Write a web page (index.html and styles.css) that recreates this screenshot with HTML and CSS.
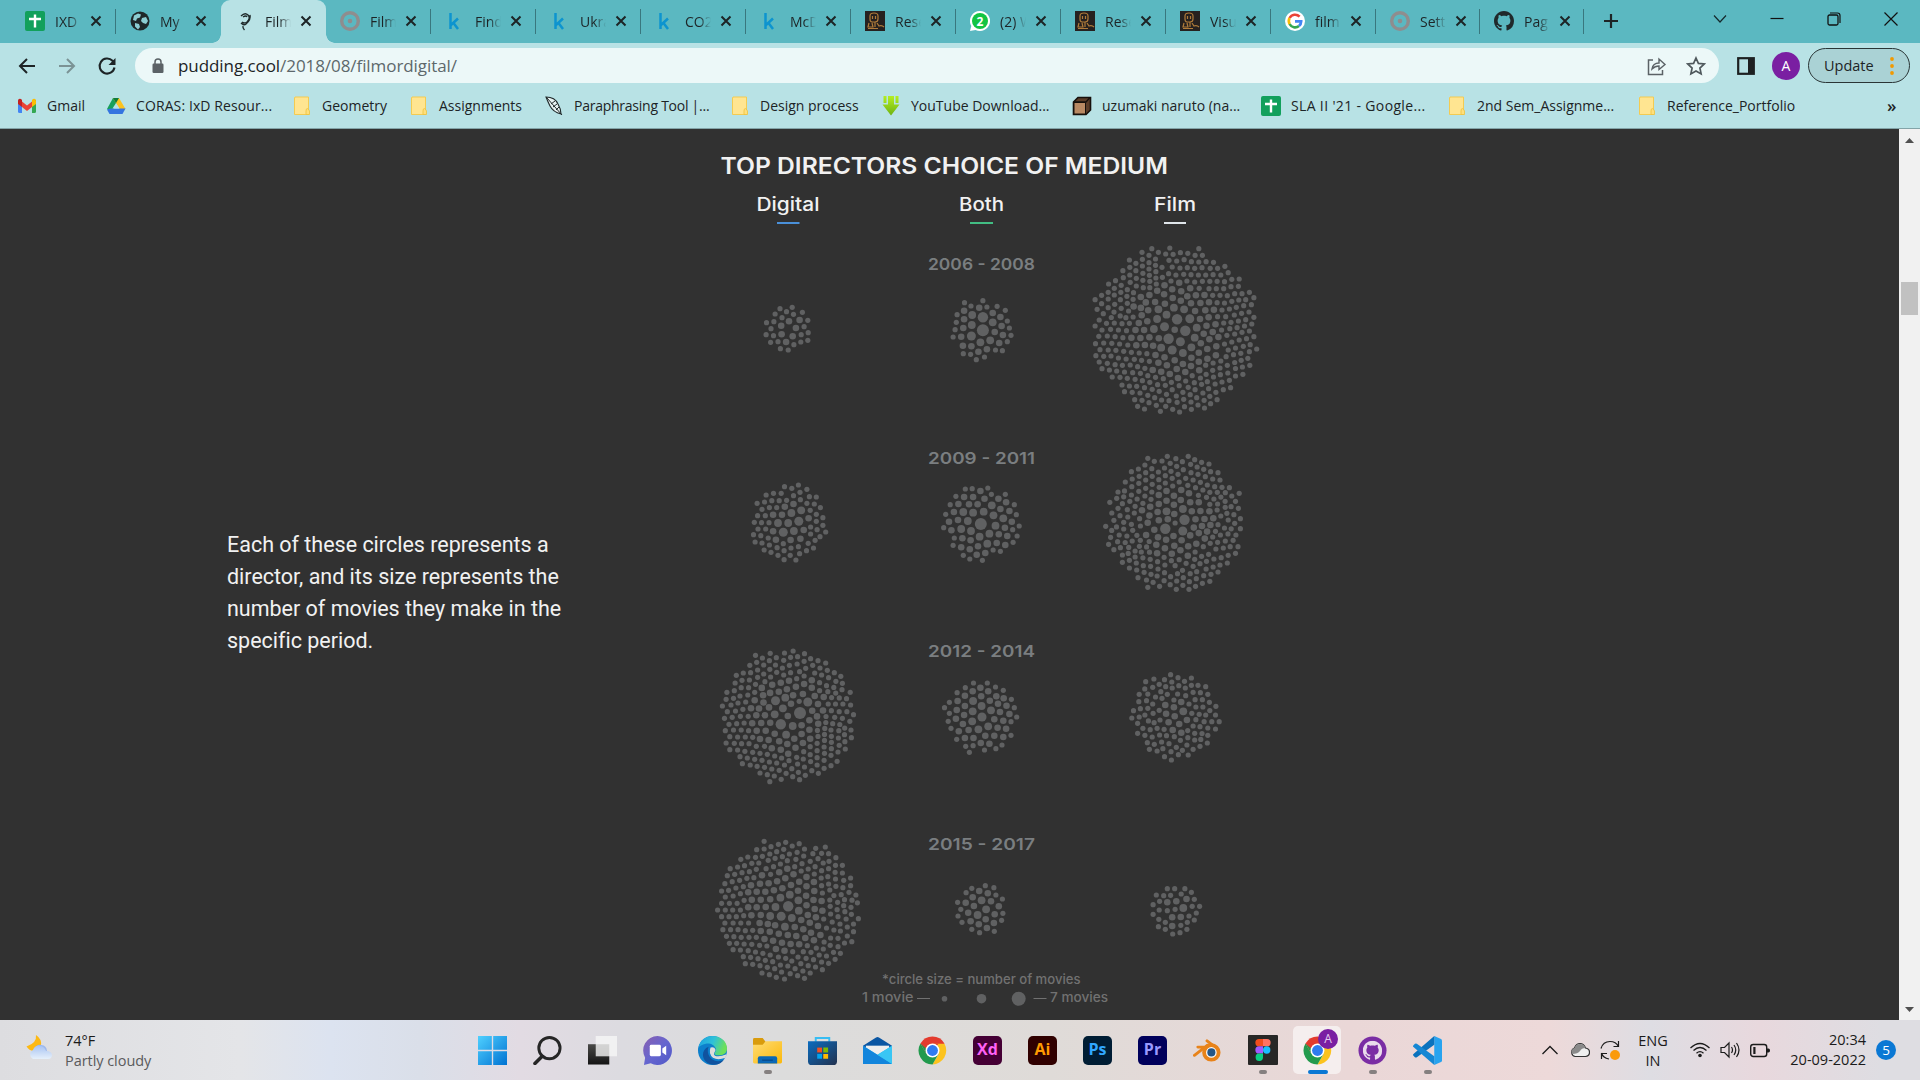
FILE: index.html
```html
<!DOCTYPE html>
<html lang="en">
<head>
<meta charset="utf-8">
<title>Film or Digital</title>
<link rel="stylesheet" href="styles.css">
</head>
<body>
<svg class="defs" aria-hidden="true">
  <defs>
    <linearGradient id="g-win" x1="0" y1="0" x2="1" y2="1"><stop offset="0" stop-color="#4fd0ff"/><stop offset="1" stop-color="#0072d2"/></linearGradient>
    <linearGradient id="g-tv1" x1="0" y1="0" x2="0" y2="1"><stop offset="0" stop-color="#4a4a48"/><stop offset="1" stop-color="#141414"/></linearGradient>
    <linearGradient id="g-chat" x1="0" y1="0" x2="1" y2="1"><stop offset="0" stop-color="#8a5fb0"/><stop offset=".5" stop-color="#6666cf"/><stop offset="1" stop-color="#5058c8"/></linearGradient>
    <linearGradient id="g-edge" x1="0" y1="0" x2="1" y2=".3"><stop offset="0" stop-color="#1c9fe0"/><stop offset=".55" stop-color="#2fc1d8"/><stop offset="1" stop-color="#6ce05a"/></linearGradient>
    <linearGradient id="g-folder" x1="0" y1="0" x2="1" y2="1"><stop offset="0" stop-color="#ffdc74"/><stop offset="1" stop-color="#fbb80a"/></linearGradient>
    <linearGradient id="g-store" x1="0" y1="0" x2="1" y2="1"><stop offset="0" stop-color="#0b6cbf"/><stop offset="1" stop-color="#22324f"/></linearGradient>
    <linearGradient id="g-cloud" x1="0" y1="0" x2="0" y2="1"><stop offset="0" stop-color="#a9c4f2"/><stop offset="1" stop-color="#e6f0fb"/></linearGradient>
    <linearGradient id="g-arrow" x1="0" y1="0" x2="0" y2="1"><stop offset="0" stop-color="#b4ee22"/><stop offset="1" stop-color="#6fb312"/></linearGradient>
    <symbol id="i-sheet" viewBox="0 0 20 20"><rect width="20" height="20" rx="2" fill="#12a05c"/><path d="M10 3.5v13M4 8h12" stroke="#fff" stroke-width="2.4"/></symbol>
    <symbol id="i-k" viewBox="0 0 20 20"><path d="M5.500 2v16M13 7.500l-7 6.500M8.500 12l4.500 6" fill="none" stroke="#0d94cf" stroke-width="2.500"/></symbol>
    <symbol id="i-ring" viewBox="0 0 20 20"><circle cx="10" cy="10" r="8.300" fill="none" stroke="#8f8d8e" stroke-width="3.400"/><circle cx="10" cy="10" r="2.300" fill="#8f8d8e"/></symbol>
    <symbol id="i-fig" viewBox="0 0 20 20"><rect width="20" height="20" fill="#26211f"/><path d="M5 8V5q0-3 4-3t4 3v3q0 3-3 3H7Q5 11 5 8zM7.500 5v3M10.500 5v3M4 12l-1 4h5l-1-4M10 11v5M3 17.500h10M12 12l2 3q3-1 5 1" fill="none" stroke="#b07c3a" stroke-width="1.200"/></symbol>
    <symbol id="i-github" viewBox="0 0 16 16"><path d="M8 0C3.580 0 0 3.580 0 8c0 3.540 2.290 6.530 5.470 7.590.4.070.55-.17.55-.38 0-.19-.01-.82-.01-1.490-2.010.37-2.530-.49-2.690-.94-.09-.23-.48-.94-.82-1.130-.28-.15-.68-.52-.01-.53.63-.01 1.080.58 1.230.82.72 1.210 1.870.87 2.330.66.070-.52.28-.87.51-1.070-1.780-.2-3.640-.89-3.640-3.950 0-.87.31-1.590.82-2.150-.08-.2-.36-1.020.08-2.120 0 0 .67-.21 2.200.82.64-.18 1.320-.27 2-.27s1.360.09 2 .27c1.530-1.040 2.200-.82 2.200-.82.44 1.100.16 1.920.08 2.120.51.56.82 1.270.82 2.150 0 3.070-1.870 3.750-3.650 3.950.29.25.54.73.54 1.480 0 1.070-.01 1.930-.01 2.200 0 .21.15.46.55.38A8.010 8.010 0 0 0 16 8c0-4.420-3.580-8-8-8z"/></symbol>
    <symbol id="i-folder" viewBox="0 0 20 20"><path d="M3 1h13.500V18.500H2.500V2z" fill="#ffe591" stroke="#f3cb52" stroke-width="1"/><path d="M14 18.500v-3.500q0-2.500 1.200-2.500t2.300 2.500v3.500z" fill="#ffdf7c" stroke="#eec23c" stroke-width=".8"/></symbol>
    <symbol id="i-chrome" viewBox="0 0 48 48"><path d="M4.080 12.500A23 23 0 0 1 43.920 12.500L24 24z" fill="#e33b2e"/><path d="M24 13h19.900A23 23 0 0 1 24 47l9.900-17z" fill="#fcc31e"/><path d="M4.080 12.500A23 23 0 0 0 24 47l9.900-17.200-19.800-.2z" fill="#229a4d"/><path d="M4.080 12.500 14.100 29.800 24 24l10-11z" fill="#e33b2e"/><path d="M4.080 12.500 14.100 29.800 24 30z" fill="#229a4d"/><circle cx="24" cy="24" r="11.500" fill="#fff"/><circle cx="24" cy="24" r="9" fill="#2f7bf0"/></symbol>
    <symbol id="i-x" viewBox="0 0 12 12"><path d="M1.500 1.500l9 9M10.500 1.500l-9 9" stroke="#1d2426" stroke-width="2"/></symbol>
  </defs>
</svg>

<header class="browser">
  <div class="tabstrip">
    <div class="tabs">
      <div class="tab"><svg class="fav"><use href="#i-sheet"/></svg><span class="tab-title">IXD</span><svg class="close"><use href="#i-x"/></svg></div>
      <div class="tab nosep"><svg class="fav" viewBox="0 0 20 20"><circle cx="10" cy="10" r="9.500" fill="#1f2829"/><path d="M4 4.500 8 2.500l3 1-1 3-3 1-1 2.500-3-1zM12 7l4-1 2 4-2 3-3-1-2-2zM5 12l4 1 1 3-2 2.500-3-3z" fill="#8ccdd2"/></svg><span class="tab-title">My</span><svg class="close"><use href="#i-x"/></svg></div>
      <div class="tab active"><svg class="fav" viewBox="0 0 20 20"><path d="M6 5q4-4 7-1t-1 7q-3 2-5 0M8 6q3-2 4 0M15 4q1 5-4 9M6 12q3 3 5 1M8 15q-.500 2 1.500 4" fill="none" stroke="#1f2a2b" stroke-width="1.400"/></svg><span class="tab-title">Film</span><svg class="close"><use href="#i-x"/></svg></div>
      <div class="tab"><svg class="fav"><use href="#i-ring"/></svg><span class="tab-title">Film</span><svg class="close"><use href="#i-x"/></svg></div>
      <div class="tab"><svg class="fav"><use href="#i-k"/></svg><span class="tab-title">Find</span><svg class="close"><use href="#i-x"/></svg></div>
      <div class="tab"><svg class="fav"><use href="#i-k"/></svg><span class="tab-title">Ukra</span><svg class="close"><use href="#i-x"/></svg></div>
      <div class="tab"><svg class="fav"><use href="#i-k"/></svg><span class="tab-title">CO2</span><svg class="close"><use href="#i-x"/></svg></div>
      <div class="tab"><svg class="fav"><use href="#i-k"/></svg><span class="tab-title">McD</span><svg class="close"><use href="#i-x"/></svg></div>
      <div class="tab"><svg class="fav"><use href="#i-fig"/></svg><span class="tab-title">Rese</span><svg class="close"><use href="#i-x"/></svg></div>
      <div class="tab"><svg class="fav" viewBox="0 0 20 20"><path d="M10 0a10 10 0 1 1-4.500 18.900L0 20l1.300-5A10 10 0 0 1 10 0z" fill="#fff"/><circle cx="10" cy="10" r="8" fill="#12c443"/><text x="10" y="14.500" text-anchor="middle" class="fav-num">2</text></svg><span class="tab-title">(2) W</span><svg class="close"><use href="#i-x"/></svg></div>
      <div class="tab"><svg class="fav"><use href="#i-fig"/></svg><span class="tab-title">Rese</span><svg class="close"><use href="#i-x"/></svg></div>
      <div class="tab"><svg class="fav"><use href="#i-fig"/></svg><span class="tab-title">Visu</span><svg class="close"><use href="#i-x"/></svg></div>
      <div class="tab"><svg class="fav" viewBox="0 0 20 20"><circle cx="10" cy="10" r="10" fill="#fff"/><g fill="none" stroke-width="2.600"><path d="M14.600 5.700A6.200 6.200 0 0 0 4.600 7" stroke="#ea4335"/><path d="M4.600 7a6.200 6.200 0 0 0 0 6" stroke="#fbbc05"/><path d="M4.600 13a6.200 6.200 0 0 0 9.400 2" stroke="#34a853"/><path d="M14 15a6.200 6.200 0 0 0 2.200-4.600H10" stroke="#4285f4"/></g></svg><span class="tab-title">film</span><svg class="close"><use href="#i-x"/></svg></div>
      <div class="tab narrow"><svg class="fav"><use href="#i-ring"/></svg><span class="tab-title">Sett</span><svg class="close"><use href="#i-x"/></svg></div>
      <div class="tab narrow"><svg class="fav dark"><use href="#i-github"/></svg><span class="tab-title">Pag</span><svg class="close"><use href="#i-x"/></svg></div>
    </div>
    <svg class="newtab" viewBox="0 0 16 16"><path d="M8 1v14M1 8h14" stroke="#1d2426" stroke-width="2.200"/></svg>
    <div class="winctl">
      <svg viewBox="0 0 16 16"><path d="M2 4.500l6 6.500 6-6.500" fill="none" stroke="#15292c" stroke-width="1.200"/></svg>
      <svg viewBox="0 0 16 16"><path d="M1.500 7.500h13" stroke="#111" stroke-width="1.200"/></svg>
      <svg viewBox="0 0 16 16"><rect x="2" y="4" width="10" height="10" rx="1.500" fill="none" stroke="#111" stroke-width="1.300"/><path d="M4 2h7.500a2.500 2.500 0 0 1 2.500 2.500V12" fill="none" stroke="#111" stroke-width="1.200"/></svg>
      <svg viewBox="0 0 16 16"><path d="M1.500 1.500l13 13M14.500 1.500l-13 13" stroke="#111" stroke-width="1.200"/></svg>
    </div>
  </div>

  <div class="toolbar">
    <svg class="nav" viewBox="0 0 20 20"><path d="M18 10H3M10 3l-7 7 7 7" fill="none" stroke="#1d2426" stroke-width="2"/></svg>
    <svg class="nav" viewBox="0 0 20 20"><path d="M2 10h15M10 3l7 7-7 7" fill="none" stroke="#7b9395" stroke-width="2"/></svg>
    <svg class="nav" viewBox="0 0 20 20"><path d="M17.500 11.500A7.500 7.500 0 1 1 15.500 4.800L17 6.500" fill="none" stroke="#1d2426" stroke-width="2.100"/><path d="M18.500 2v7h-7z" fill="#1d2426"/></svg>
    <div class="omnibox">
      <svg class="lock" viewBox="0 0 12 16"><rect x="0.500" y="5.500" width="11" height="9.500" rx="1.200" fill="#5b6266"/><path d="M3 6V4a3 3 0 0 1 6 0v2" fill="none" stroke="#5b6266" stroke-width="1.500"/></svg>
      <span class="url">pudding.cool<span class="path">/2018/08/filmordigital/</span></span>
      <svg class="share" viewBox="0 0 20 20"><path d="M6 4H1.500v14.500h14V14" fill="none" stroke="#5b6266" stroke-width="1.500"/><path d="M5 13q1-6 7-6V3l6 5.500-6 5V10q-4 0-7 3z" fill="none" stroke="#5b6266" stroke-width="1.400"/></svg>
      <svg class="star" viewBox="0 0 20 20"><path d="M10 2l2.400 5.400 5.900.6-4.400 4 1.200 5.900L10 14.900l-5.100 3 1.200-5.900-4.400-4 5.900-.6z" fill="none" stroke="#4f585c" stroke-width="1.700"/></svg>
    </div>
    <svg class="panel" viewBox="0 0 18 18"><rect x="1.200" y="1.200" width="15.600" height="15.600" fill="none" stroke="#1d2021" stroke-width="2.200"/><rect x="11" y="1" width="6" height="16" fill="#1d2021"/></svg>
    <div class="avatar">A</div>
    <div class="update">Update<svg viewBox="0 0 4 18"><circle cx="2" cy="2" r="1.900"/><circle cx="2" cy="9" r="1.900"/><circle cx="2" cy="16" r="1.900"/></svg></div>
  </div>

  <nav class="bookmarks">
    <a><svg viewBox="0 0 20 20"><path d="M1 4h4v13H2.500Q1 17 1 15.500z" fill="#4285f4"/><path d="M15 4h4v11.500q0 1.500-1.500 1.500H15z" fill="#34a853"/><path d="M5 5.500l5 4 5-4v5.500l-5 4-5-4z" fill="#ea4335"/><path d="M1 5q0-3 3-2l1 1v7L1 8z" fill="#c5221f"/><path d="M19 5q0-3-3-2l-1 1v7l4-3z" fill="#fbbc04"/></svg>Gmail</a>
    <a><svg viewBox="0 0 20 20"><path d="M7 2h6l-7 15-5-4z" fill="#18a05a"/><path d="M7 2h6l6.500 11h-6z" fill="#fcc31e"/><path d="M4.500 12.500H19.500l-3 5.500H3.500L1 13.500z" fill="#3474e0"/><path d="M10 7l3.500 5.500h-7z" fill="#b8e2e5"/><path d="M7 2h6l-3 5z" fill="#0e7b3c"/></svg><span class="drive">CORAS: IxD Resour...</span></a>
    <a><svg><use href="#i-folder"/></svg>Geometry</a>
    <a><svg><use href="#i-folder"/></svg>Assignments</a>
    <a><svg viewBox="0 0 20 20"><path d="M2 1q9 0 12 7 3 5 3 10-8-2-11-8Q4 6 2 1z" fill="#e6f1f1" stroke="#20292a" stroke-width="1.100"/><path d="M3 2l15 17M7 8l4-3M9 11l4-3M12 14l3-3" fill="none" stroke="#20292a" stroke-width="1"/></svg><span class="tight">Paraphrasing Tool |...</span></a>
    <a><svg><use href="#i-folder"/></svg>Design process</a>
    <a><svg viewBox="0 0 20 20"><path d="M2.500 0h3v7h-3zM7 0h6v8.500h5.500L10 19.500 1.500 8.500H7zM14.500 0h3v7h-3z" fill="url(#g-arrow)"/></svg>YouTube Download...</a>
    <a><svg viewBox="0 0 20 20"><path d="M1.500 6 6 1.500h12.500V14L14 18.500H1.500z" fill="#5b3c28" stroke="#17100c" stroke-width="1.600"/><path d="M2 6.500h11.500V18H2z" fill="#b98963" stroke="#17100c"/><path d="M2 6 14 6l4-4.500" fill="none" stroke="#17100c" stroke-width="1.300"/></svg>uzumaki naruto (na...</a>
    <a><svg><use href="#i-sheet"/></svg><span class="loose">SLA II '21 - Google...</span></a>
    <a><svg><use href="#i-folder"/></svg>2nd Sem_Assignme...</a>
    <a><svg><use href="#i-folder"/></svg>Reference_Portfolio</a>
    <span class="more">»</span>
  </nav>
</header>

<div class="viewport">
  <main class="page">
    <p class="story">Each of these circles represents a<br>director, and its size represents the<br>number of movies they make in the<br>specific period.</p>
    <svg class="chart" viewBox="700 129 640 891">
      <text class="title" x="720.500" y="174" textLength="447.500" lengthAdjust="spacingAndGlyphs">TOP DIRECTORS CHOICE OF MEDIUM</text>
      <g class="column">
        <text x="756.500" y="211" textLength="63" lengthAdjust="spacingAndGlyphs">Digital</text>
        <text x="959" y="211" textLength="45" lengthAdjust="spacingAndGlyphs">Both</text>
        <text x="1154" y="211" textLength="42" lengthAdjust="spacingAndGlyphs">Film</text>
      </g>
      <rect x="777" y="222" width="22.500" height="2" fill="#4a90d9"/>
      <rect x="970" y="222" width="23" height="2" fill="#42bd83"/>
      <rect x="1164" y="222" width="22" height="2" fill="#dfe5ea"/>
      <g class="period">
        <text x="928" y="270" textLength="107" lengthAdjust="spacingAndGlyphs">2006 - 2008</text>
        <text x="928" y="464" textLength="107" lengthAdjust="spacingAndGlyphs">2009 - 2011</text>
        <text x="928" y="657" textLength="107" lengthAdjust="spacingAndGlyphs">2012 - 2014</text>
        <text x="928" y="850" textLength="107" lengthAdjust="spacingAndGlyphs">2015 - 2017</text>
      </g>
      <g id="dots" class="dots"></g>
      <g class="legend">
        <text x="882" y="984" textLength="198.500" lengthAdjust="spacingAndGlyphs">*circle size = number of movies</text>
        <text x="862" y="1002" textLength="51.500" lengthAdjust="spacingAndGlyphs">1 movie</text>
        <path d="M917 998.500h13M1033.500 998.500h13"/>
        <text x="1050" y="1002" textLength="58" lengthAdjust="spacingAndGlyphs">7 movies</text>
      </g>
      <g class="dots"><circle cx="944.500" cy="998.700" r="2.800"/><circle cx="981.500" cy="998.700" r="4.800"/><circle cx="1018.700" cy="998.700" r="7"/></g>
    </svg>
  </main>
  <div class="scrollbar">
    <svg viewBox="0 0 9 5"><path d="M0 5 4.500 0 9 5z"/></svg>
    <div class="track"><div class="thumb"></div></div>
    <svg viewBox="0 0 9 5"><path d="M0 0h9L4.500 5z"/></svg>
  </div>
</div>

<footer class="taskbar">
  <div class="weather">
    <svg viewBox="0 0 28 26"><path d="M11 1q1 8-9.500 11.500 4 6 10 3.500 6.500-3.500 4-10Q14 3 11 1z" fill="#fdb913"/><path d="M9 16q2-6 7.500-5 5 .5 5.500 6z" fill="#9db9ee"/><path d="M8 25a5 5 0 0 1 0-9q2-5 7-4 4 0 6 5 6 0 6 4.500-.5 3.500-4 3.500z" fill="url(#g-cloud)"/></svg>
    <div><div>74°F</div><div class="muted">Partly cloudy</div></div>
  </div>
  <div class="apps">
    <div class="app"><svg viewBox="0 0 30 30"><path d="M0 0h14.300v14.300H0zM15.700 0H30v14.300H15.700zM0 15.700h14.300V30H0zM15.700 15.700H30V30H15.700z" fill="url(#g-win)"/></svg></div>
    <div class="app"><svg viewBox="0 0 30 30"><circle cx="17" cy="12.500" r="11" fill="none" stroke="#262626" stroke-width="3"/><path d="M9.500 21 2 28.500" stroke="#262626" stroke-width="3.600" stroke-linecap="round"/></svg></div>
    <div class="app"><svg viewBox="0 0 30 30"><rect x="0" y="8.500" width="22" height="21" fill="url(#g-tv1)"/><rect x="8" y="0" width="22" height="21" fill="#f6f6f6" fill-opacity=".8"/></svg></div>
    <div class="app"><svg viewBox="0 0 30 30"><path d="M15 0a15 15 0 1 1-7 28.300L1 30l1.200-7.500A15 15 0 0 1 15 0z" fill="url(#g-chat)"/><rect x="7" y="9" width="11.500" height="12" rx="1.500" fill="#fff"/><path d="M20 13l4-3v10l-4-3z" fill="#fff"/></svg></div>
    <div class="app"><svg viewBox="0 0 30 30"><circle cx="15" cy="15" r="15" fill="#0d7fcc"/><path d="M.5 12C2 4 8 0 15 0c9 0 15 6 15 13 0 6-5 7-9 7-3 0-4-1-4-2s2-2 1.500-4.500C17.500 9 12 7 8 8 4 9 1.500 10.500.5 12z" fill="url(#g-edge)"/><path d="M11 11c-3 7 2 15 10 15 3 0 5-1 6-2-3 5-9 7-15 5C3 25 3 14 11 11z" fill="#10539f"/><path d="M13 12q4-1 5 2c.5 2-1.500 3-1.500 4.500 0 3 6 3.500 13 .5l-1 3.500q-8 3-13 0-5-4-2.500-10.500z" fill="#dedcdb"/></svg></div>
    <div class="app running"><svg viewBox="0 0 30 30"><path d="M0 3.500Q0 2 1.500 2H10l3 4v8H0z" fill="#d99b0c"/><path d="M0 9h10l3-3.500h17V27q0 1.500-1.500 1.500h-27Q0 28.500 0 27z" fill="url(#g-folder)"/><path d="M5 28.500V23q0-2 2-2h16q2 0 2 2v5.500z" fill="#0b68b6"/><path d="M9.500 25h11" stroke="#084685" stroke-width="1.200"/></svg></div>
    <div class="app"><svg viewBox="0 0 30 30"><path d="M8 6V2h14v4" fill="none" stroke="#37bdf3" stroke-width="2"/><path d="M0 5.500h30V26q0 4-4 4H4q-4 0-4-4z" fill="url(#g-store)"/><path d="M9.500 12h5v5h-5z" fill="#f25022"/><path d="M15.800 12h5v5h-5z" fill="#7fba00"/><path d="M9.500 18.500h5v5h-5z" fill="#00a4ef"/><path d="M15.800 18.500h5v5h-5z" fill="#ffb900"/></svg></div>
    <div class="app"><svg viewBox="0 0 30 30"><path d="M0 10 13.500 1.500q1.500-1 3 0L30 10v3H0z" fill="#0a56a3"/><path d="M3 10h24v12H3z" fill="#eee"/><path d="M0 10l15 9.500L30 10v19H0z" fill="#2cb0ee"/><path d="M0 29 0 10 30 29z" fill="#1285dc"/><path d="M15 19.500 30 10v19z" fill="#39c6f4"/></svg></div>
    <div class="app"><svg><use href="#i-chrome"/></svg></div>
    <div class="app"><span class="tile xd">Xd</span></div>
    <div class="app"><span class="tile ai">Ai</span></div>
    <div class="app"><span class="tile ps">Ps</span></div>
    <div class="app"><span class="tile pr">Pr</span></div>
    <div class="app"><svg viewBox="0 0 30 30"><path d="M1.500 20 15 9.500M5 11.500h13M14.500 5l8.500 6.500" stroke="#e8831a" stroke-width="3" stroke-linecap="round"/><circle cx="19" cy="17" r="7.500" fill="#fff" stroke="#e8831a" stroke-width="4"/><circle cx="19" cy="17" r="4.200" fill="#265787"/></svg></div>
    <div class="app running"><svg class="figma" viewBox="0 0 30 30"><rect width="30" height="30" rx="1" fill="#272726"/><path d="M11 4h4v7.300h-4a3.650 3.650 0 0 1 0-7.300z" fill="#f24e1e"/><path d="M15 4h4a3.650 3.650 0 0 1 0 7.300h-4z" fill="#ff7262"/><path d="M11 11.300h4v7.300h-4a3.650 3.650 0 0 1 0-7.300z" fill="#a259ff"/><circle cx="18.700" cy="15" r="3.700" fill="#1abcfe"/><path d="M11 18.600h4v3.700a3.700 3.700 0 1 1-4-3.700z" fill="#0acf83"/></svg></div>
    <div class="app current"><svg><use href="#i-chrome"/></svg><span class="profile">A</span></div>
    <div class="app running"><svg viewBox="0 0 30 30"><circle cx="15" cy="15" r="14.500" fill="#7a2da4"/><use href="#i-github" x="5" y="5" width="20" height="20" fill="#eadcec"/></svg></div>
    <div class="app running"><svg viewBox="0 0 30 30"><path d="M22 0l7 3q1 .5 1 2v20q0 1.500-1 2l-7 3z" fill="#28a3ef"/><path d="M22 0v9L4 22q-1 .5-2 0l-1.500-1.500q-1-1 0-2z" fill="#0a72bd"/><path d="M22 30v-9L4 8q-1-.5-2 0L.5 9.500q-1 1 0 2z" fill="#1587d4"/></svg></div>
  </div>
  <div class="tray">
    <svg class="chev" viewBox="0 0 16 10"><path d="M.5 9 8 1.500 15.500 9" fill="none" stroke="#1b1b1b" stroke-width="1.300"/></svg>
    <svg class="ico" viewBox="0 0 20 20"><path d="M5 16.500a4.500 4.500 0 0 1-.5-8.500Q6 3.500 10 3.500t5.500 4.500q4 .5 4 4.300t-4 4.200z" fill="#f0f0f0" stroke="#333" stroke-width="1.200"/><path d="M1.500 11q1-3 3-3 1.500-4 5.500-4t5.500 4q-4 0-5.500 3-2 3-8 3z" fill="#8a8a8a"/></svg>
    <svg class="ico" viewBox="0 0 20 20"><path d="M1 8.500Q3 1.500 10 1.500q6 0 8.500 5M18.500 1v5.500h-5M9 19q-6-1-7.500-6M1.500 19v-5.500H7" fill="none" stroke="#1b1b1b" stroke-width="1.200"/><circle cx="15" cy="15" r="5" fill="#fa9a0b"/></svg>
    <div class="lang">ENG<br>IN</div>
    <svg class="ico" viewBox="0 0 20 20"><path d="M.5 8Q10-1 19.500 8M3.500 10.500q6.500-6 13 0M6.500 13.300q3.500-3.300 7 0" fill="none" stroke="#1b1b1b" stroke-width="1.300"/><circle cx="10" cy="15.500" r="1.800" fill="#1b1b1b"/></svg>
    <svg class="ico" viewBox="0 0 20 20"><path d="M1 7.500h3.500L9 3v14l-4.500-4.500H1z" fill="none" stroke="#1b1b1b" stroke-width="1.200"/><path d="M11.500 7q2 3 0 6M14 5q3.500 5 0 10M16.500 3q5 7 0 14" fill="none" stroke="#1b1b1b" stroke-width="1.200"/></svg>
    <svg class="ico" viewBox="0 0 20 20"><rect x=".7" y="4.500" width="16" height="12" rx="2.500" fill="none" stroke="#1b1b1b" stroke-width="1.400"/><path d="M3.300 7h2.200v7H3.300zM17 8.500h1.500q1.500 0 1.500 2t-1.500 2H17z" fill="#1b1b1b"/></svg>
    <div class="clock">20:34<br>20-09-2022</div>
    <div class="count">5</div>
  </div>
</footer>
<script src="chart.js"></script>
</body>
</html>
```
FILE: styles.css
```css
* { box-sizing: border-box; }
body {
  margin: 0;
  width: 1920px;
  height: 1080px;
  overflow: hidden;
  display: flex;
  flex-direction: column;
  font-family: "Open Sans", "Noto Sans", sans-serif;
  font-size: 14px;
  color: #1d2426;
}
svg { display: block; flex: none; }
.defs { position: absolute; width: 0; height: 0; }

.browser { height: 129px; background: #b8e2e5; border-bottom: 1px solid #83a4a8; }
.tabstrip { display: flex; height: 43px; background: #5bb8c1; padding-left: 11px; }
.tabs { display: flex; }
.tab { position: relative; display: flex; align-items: center; width: 105px; height: 43px; padding-left: 14px; padding-bottom: 1px; }
.tab.narrow { width: 104px; }
.tab::after { content: ""; position: absolute; right: 0; top: 9px; width: 1px; height: 25px; background: #39777e; }
.tab.nosep::after, .tab.active::after { display: none; }
.tab.active { background: #b8e2e5; border-radius: 9px 9px 0 0; }
.tab.active::before {
  content: ""; position: absolute; left: -9px; right: -9px; bottom: 0; height: 9px;
  background: radial-gradient(circle at 0 0, transparent 8.5px, #b8e2e5 9px) left / 9px 9px no-repeat,
              radial-gradient(circle at 100% 0, transparent 8.5px, #b8e2e5 9px) right / 9px 9px no-repeat;
}
.fav { width: 20px; height: 20px; }
.fav.dark { fill: #20292b; }
.fav-num { font: 700 12px "Open Sans", sans-serif; fill: #fff; }
.tab-title {
  width: 26px; margin-left: 10px; overflow: hidden; white-space: nowrap;
  -webkit-mask-image: linear-gradient(90deg, #000 55%, transparent);
  mask-image: linear-gradient(90deg, #000 55%, transparent);
}
.close { width: 12px; height: 12px; margin-left: 9px; }
.newtab { width: 16px; height: 16px; margin: 13px 0 0 19px; }
.winctl { display: flex; gap: 41px; margin-left: auto; padding: 11px 21px 0 0; }
.winctl svg { width: 16px; height: 16px; }

.toolbar { display: flex; align-items: center; height: 45px; padding: 0 10px 0 17px; }
.nav { width: 20px; height: 20px; margin-right: 20px; }
.nav + .nav + .nav { margin-right: 18px; }
.omnibox { display: flex; align-items: center; width: 1584px; height: 35px; padding-left: 17px; border-radius: 18px; background: #ecf8f8; }
.lock { width: 12px; height: 16px; }
.url { margin-left: 14px; font-size: 17px; letter-spacing: -.07px; }
.path { color: #5d686b; }
.share { width: 20px; height: 20px; margin-left: auto; }
.star { width: 20px; height: 20px; margin: 0 13px 0 19px; }
.panel { width: 18px; height: 18px; margin-left: 18px; }
.avatar { display: grid; place-items: center; width: 28px; height: 28px; margin-left: 17px; border-radius: 50%; background: #7a1fa2; color: #fff; }
.update { display: flex; align-items: center; justify-content: space-between; width: 102px; height: 35px; margin-left: 8px; padding: 0 15px; border: 1px solid #2a3536; border-radius: 18px; background: #aad2d5; font-size: 14.500px; }
.update svg { width: 4px; height: 18px; fill: #f29900; }

.bookmarks { display: grid; grid-template-columns: 89px 186px 117px 135px 186px 151px 191px 189px 186px 190px 250px auto; align-items: center; height: 35px; padding-left: 17px; }
.bookmarks a { display: flex; align-items: center; gap: 10px; white-space: nowrap; }
.bookmarks svg { width: 20px; height: 20px; }
.tight { letter-spacing: -.25px; }
.loose { letter-spacing: .35px; }
.drive { letter-spacing: .1px; }
.more { font-size: 17px; font-weight: 600; }

.viewport { display: flex; height: 891px; }
.page { display: flex; align-items: flex-start; width: 1899px; background: #313131; }
.story { width: 473px; margin: 400px 0 0 227px; font: 21.500px/32px Roboto, Arial, sans-serif; letter-spacing: -.01px; color: #f1f1f1; }
.chart { width: 640px; height: 891px; font-family: Inter, "Open Sans", sans-serif; }
.title { font-size: 23px; font-weight: 600; fill: #f1f1f1; }
.column { font-size: 18.500px; font-weight: 500; fill: #f1f1f1; }
.period { font-size: 16.500px; font-weight: 600; fill: #7a7e80; }
.legend { font-size: 13px; font-weight: 500; fill: #717171; stroke: none; }
.legend path { stroke: #717171; stroke-width: 1; }
.dots { fill: #606162; }

.scrollbar { display: flex; flex-direction: column; align-items: center; width: 21px; padding: 9px 0 8px; background: #f1f1f1; }
.scrollbar > svg { width: 9px; height: 5px; fill: #505050; }
.track { flex: 1; width: 17px; padding-top: 139px; }
.thumb { height: 33px; background: #c1c1c1; }

.taskbar {
  display: flex; align-items: center; height: 60px; color: #1b1b1b; font-size: 14.500px;
  background: linear-gradient(90deg, #dddde0 0, #e4e5e8 240px, #dce3f0 330px, #dadfe9 420px, #e2dbe3 520px, #dcdbe0 620px, #dcdcdc 780px, #dfdbd8 1050px, #ead7d7 1350px, #edd9d9 1550px, #dedde3 1650px, #e8d8dd 1760px, #dedde2 1880px);
}
.weather { display: flex; width: 465px; padding: 1px 0 0 25px; gap: 12px; line-height: 20px; }
.weather svg { width: 28px; height: 26px; margin-top: 3px; }
.muted { color: #5a5a5c; letter-spacing: -.05px; }
.apps { display: flex; }
.app { position: relative; display: grid; place-items: center; width: 55px; height: 60px; }
.app > svg { width: 29px; height: 29px; }
.app > .figma { width: 30px; height: 30px; }
.app > * { position: relative; }
.running::after, .current::after { content: ""; position: absolute; bottom: 6px; width: 8px; height: 4px; border-radius: 2px; background: #858080; }
.current::before { content: ""; position: absolute; left: 3px; top: 6px; width: 48px; height: 48px; border-radius: 5px; background: #f5eeee; }
.current::after { width: 20px; background: #0a78d4; }
.app > .profile { position: absolute; left: 28px; top: 9px; width: 20px; height: 20px; border-radius: 50%; background: #7a1fa2; color: #e6cdf0; font-size: 12px; line-height: 20px; text-align: center; }
.tile { width: 29px; height: 29px; border-radius: 5px; font-weight: 700; font-size: 16px; line-height: 27px; text-align: center; }
.xd { background: #450035; color: #ff61f6; }
.ai { background: #300000; color: #ff9a00; }
.ps { background: #001d34; color: #31a8ff; }
.pr { background: #00005b; color: #9999ff; }
.tray { display: flex; align-items: center; margin-left: auto; padding-right: 24px; line-height: 20px; }
.chev { width: 16px; height: 10px; margin-right: 12px; }
.ico { width: 20px; height: 20px; margin-right: 10px; }
.lang { width: 50px; margin: 1px 12px 0 -2px; text-align: center; }
.clock { width: 86px; text-align: right; white-space: nowrap; }
.count { width: 20px; height: 20px; margin-left: 10px; border-radius: 50%; background: #0a78d4; color: #fff; text-align: center; font-size: 13.500px; line-height: 20px; }
```
FILE: chart.js
```js
// Each cluster lists its dots as "column,row[,size]" in grid units; letters give the size step.
const SIZES = { a: 3.3, b: 3.9, c: 4.5, d: 5.2, e: 6 };
const BASE = 2.6;
const GAP = 0.8;
const toX = u => 700 + u / 2.45;
const toY = (v, top) => top + v / 3;

const clusters = [
  [130, "196,536 226,532 184,552 212,545 251,547 229,553 201,563 163,578 181,575 218,574,a 244,570,a 264,571 199,587,a 174,596 235,594,a 255,590 162,614 180,617 200,613,a 227,619,a 248,614 265,608 173,637 191,635 211,636,a 247,636 264,631 230,644 197,656 216,660"],
  [130, "648,518 693,512 664,528 684,533,a 703,531 728,529 647,542,a 717,549,a 748,541 630,554 667,555,b 693,562,d 736,561,a 647,568,a 753,573 628,577 666,585,b 717,577,b 739,588,a 625,599 645,594,a 693,601,e 758,594 722,606,a 620,621 640,620,a 665,618,c 711,631,b 742,615,a 762,616 687,637,b 733,639,a 753,635 644,647,a 665,649,a 682,665,a 703,658,a 724,660 741,662 645,671 663,673 697,681 677,689"],
  [130, "1107,356 1151,354 1222,356 1083,367 1123,367 1141,372 1159,373 1177,368 1195,370 1213,376 1231,376 1100,376 1052,390 1084,388 1116,387 1149,391 1168,393 1186,389 1204,395 1222,396 1240,395 1258,397 1068,400 1100,398 1053,412 1084,408 1116,406 1132,412 1157,411 1176,414 1194,413 1212,415 1230,413 1250,415 1268,415 1286,409 1036,422 1068,422 1100,417 1117,425 1148,431 1166,435 1185,433 1203,434 1221,435 1239,435 1257,434 1276,435 1294,428 1053,435 1085,430 1037,443 1069,445 1101,436 1117,444 1133,442 1154,453 1174,458,a 1193,453 1212,456 1231,454 1249,454 1267,454 1285,455 1303,448 1321,447 1018,452 1001,462 1054,457 1085,451 1102,454 1118,463 1138,466,a 1032,466 1015,475 1047,479 1069,468 1086,473 1102,473 1157,478,a 1179,484,a 1201,475,a 1223,475 1247,476 1265,476 1283,476 1301,470 1319,469 1000,487 1031,487 1062,488 1120,481,a 1137,493,a 1101,495,a 1080,501,a 984,496 1015,495 1046,499 1194,499,a 1215,496,a 1236,495,a 1256,496 1274,496 1292,497 1310,491 1328,491 1346,487 1357,503 968,509 1000,507 1030,509 1061,508 984,521 1016,523 1047,520 1065,530,a 1091,519,a 1115,516,a 1158,504,a 1178,512,a 1139,521,a 1203,520,a 1226,519,a 1247,517,a 1267,518 1285,519 1303,514 1320,510 1337,509 973,538 1000,533 1032,535 1050,543 1079,533,a 1098,541,a 1123,538,b 1161,533,b 1186,538,b 1213,543,a 1238,541,a 1259,539,a 1279,540 1297,537 1314,532 1332,527 1351,524 988,551 1014,547 1008,562 1082,554,a 1096,574,a 1143,554,b 1120,567,b 1169,568,d 1200,566,c 1225,567,a 1246,562,a 1268,560 1288,560 1309,555 1327,550 1345,546 1357,562 978,570 1030,558 1061,561 1043,563 1075,579,a 1052,580 1034,581 1015,579 996,580 968,588 1138,590,c 1163,599,a 1189,602,d 1217,593,b 1241,587,a 1263,583,a 1283,579 1301,577 1319,573 1337,569 1352,582 985,600 1006,598 1025,600 1045,602 1067,600,a 1088,600,a 1112,597,b 1334,588 1316,593 1298,596 1278,600 1256,606,a 1234,611,a 977,619 998,618 1017,620 1036,623 969,641 1057,623,a 1079,624,a 1101,622,a 1124,625,a 1148,626,d 1177,635,c 1212,623,b 1248,628,a 1270,621,a 1291,616 1310,612 1328,607 1346,603 1357,620 989,639 1009,640 1028,642 1048,645 1069,646,a 1090,645,a 1110,647,a 1130,653,b 1157,660,c 1227,640,a 1204,652,b 1183,669,b 1243,657,a 1265,649,a 1285,642 1303,636 1321,630 1339,626 1348,644 980,659 1000,660 1019,661 1038,664 1057,667 1076,669 1095,671 1116,675,a 1138,682,a 1222,668,a 1294,660 1312,654 1331,649 1364,657 1346,665 970,677 989,679 1007,678 1025,684 1044,687 1064,688 1082,691 1101,694 1123,698,a 1163,691,a 1204,683,a 1243,687,a 1264,676,a 1289,680 1307,674 1325,670 1342,685 978,696 998,700 1017,704 1035,706 1054,705 1072,710 1090,715 1109,720,a 1144,706,a 1183,702,a 1203,708,a 1222,695,a 1239,705 1257,699 1276,693 1292,706 1310,698 1326,691 985,716 1003,720 1021,723 1040,726 1060,728 1079,730 1097,737 1130,725,a 1151,732,a 1168,717,a 1189,726,a 1223,721,a 1256,721 1274,714 1312,715 1329,711 1347,706 1010,741 1029,742 1047,745 1066,748 1084,752 1102,757 1116,742 1135,746 1171,744,a 1206,737 1240,733 1258,741 1275,734 1293,729 1330,733 1312,738 1034,765 1052,768 1070,769 1089,773 1121,764 1140,766 1155,757 1190,753 1226,744 1211,758 1243,755 1262,762 1279,756 1297,751 1040,785 1059,787 1078,789 1108,778 1125,784 1157,779 1174,767 1196,772 1229,763 1213,779 1246,776 1264,787 1282,779 1300,773 1065,809 1097,796 1114,803 1143,793 1131,810 1167,798 1183,787 1201,794 1232,789 1217,803 1249,799 1267,809 1072,829 1100,818 1083,811 1118,826 1149,812 1169,817 1185,808 1203,816 1235,811 1220,825 1251,821 1089,837 1128,844 1141,829 1158,838 1175,846 1187,830 1204,838 1236,834"],
  [430, "207,170 241,165 225,175 262,178 245,187 162,195 180,190 199,190 229,197 268,200 285,201 212,212 194,212 176,212 158,216 140,220 246,209 229,222,a 262,220 280,222 208,229,a 152,238 170,233 188,233 224,249,b 248,241,b 270,241 295,233 141,257 160,257 179,254,a 201,254,a 266,265,a 285,253 301,263 133,277 151,278 169,278 191,279,b 216,279,b 242,274,c 285,274 301,286 142,297 161,297 179,304,a 204,307,c 230,303,b 254,300,a 271,291 287,299 308,306 131,314 149,317 271,312 167,324 186,329,a 222,330,a 246,326,a 294,320 265,340 282,331 135,336 152,339 170,345 204,341 189,353 223,354 241,350 278,354 157,360 206,362 261,362 174,367 191,376 221,376 244,371 206,389 235,390"],
  [430, "650,177 667,176 687,183,a 705,174 714,193 748,193 627,199 647,201,a 669,201,a 697,206,a 731,206,a 613,224 633,222,a 659,223,a 680,223,a 715,226,b 750,217,a 770,224 622,246,a 645,246,b 669,248,b 695,245,b 736,237,a 758,243,a 602,253 719,256,b 775,254 743,265,b 610,275,a 632,270,a 656,273,b 688,282,e 764,275,a 597,293 616,301,a 640,297,b 724,287,b 747,293,a 782,288 766,299 664,303,b 709,311,b 732,313,a 685,320,b 753,318,a 777,318 623,324 643,325,a 663,331,a 704,341,b 727,339,a 767,337 748,345,a 620,346 640,352,a 681,349,a 661,358,a 718,360 736,364 699,369,a 645,376 678,374,a 661,387 692,391"],
  [430, "1097,85 1145,79 1196,79 1113,94 1132,93 1166,86 1182,95 1212,89 1229,97 1247,102 1090,105 1152,100 1168,109 1202,103 1218,111 1234,118 1251,125 1269,128 1057,125 1074,117 1107,116 1138,114 1092,128 1123,126 1154,124 1184,119 1203,128 1220,133 1238,140 1256,147 1274,150 1059,147 1076,139 1108,139 1140,137 1042,156 1092,150 1124,149 1157,145 1171,133 1190,145 1208,150 1226,157 1243,165 1261,170 1279,172 1297,173 1075,160 1108,163 1140,159 1174,156 1058,170 1092,175 1125,172 1158,168 1195,166 1214,173 1232,180 1249,187 1268,188 1287,188 1024,186 1040,183 1075,184 1107,186 1143,183,a 1179,180,a 1303,198 1321,190 1021,205 1038,200 1057,195 1090,198 1124,195,a 1161,197,a 1198,190,a 1221,196 1241,202 1259,207 1277,202 1004,217 1035,221 1053,214 1071,207 1105,208 1143,212,a 1178,210,a 1201,217,a 1222,217,a 1249,223 1268,222 1285,212 1312,214 1024,235 1047,239 1066,229 1085,220 1103,230,a 1124,222,a 1161,224,a 1183,237,b 1205,244,a 1226,243,a 1248,244,a 1267,240 1287,232 1301,230 1319,235 1009,249 1029,257 1064,249 1083,241,a 1121,246,a 1143,244,b 1162,252,a 1308,254 1291,250 1276,258 1014,271 1038,277 1048,261 1077,266 1101,257,a 1124,271,a 1146,268,a 1187,269,d 1214,268,a 1236,267,a 1257,266,a 1294,270 1324,266 1164,279 994,289 1019,292 1057,283 1079,288 1097,278,a 1113,299,a 1140,296,d 1210,293,a 1230,288,a 1250,286,a 1269,284 1310,280 1010,300 1038,297 1060,301 1183,303,c 1160,318,a 1201,316,a 1222,309,a 1243,303,a 1263,304 1285,294 1301,297 1324,296 1006,322 1027,315 1046,318 1071,317 1093,315,a 1122,322,a 1142,329,a 1180,331,a 1237,325,a 1256,321 1275,315 1294,311 1313,315 1001,343 1023,335 1042,338 1059,333 1078,332 1100,336 1118,344,a 1196,349,a 1216,341,a 1162,347,a 1250,340 1268,337 1287,333 1306,331 1014,359 1030,353 1050,353 1077,348 1095,350 1139,355,a 1177,361,a 1233,350 1264,357 1282,354 1299,350 1318,350 1035,375 1049,369 1066,363 1081,365 1101,366 1120,370,a 1156,371,a 1213,366 1246,373 1066,381 1085,383 1137,382 1195,377,a 1174,389 1212,388 1229,379 1277,383 1294,376 1312,370 1035,397 1052,391 1069,399 1086,407 1103,388 1121,395 1139,405 1155,392 1191,400 1225,401 1241,394 1259,387 1052,414 1070,420 1104,409 1122,417 1164,407 1182,421 1208,409 1240,417 1257,411 1274,405 1292,399 1073,443 1088,427 1105,433 1138,428 1153,440 1170,431 1201,431 1217,425 1234,437 1252,433 1269,426 1094,450 1110,457 1120,438 1137,452 1168,453 1184,443 1199,455 1216,446 1249,454 1097,472 1126,469 1152,464 1167,478 1183,466 1198,478 1214,469 1231,460"],
  [630, "136,76 172,70 207,69 228,63 256,71 153,84 187,83 222,82 239,80 271,86 289,92 308,99 122,106 139,97 170,92 205,91 156,105 185,105 219,106 238,102 255,94 276,106 294,114 312,121 329,128 345,139 89,136 106,129 124,128 141,120 171,118 202,114 156,132 188,127 222,128 244,125 259,115 205,135 173,141 281,129 298,135 315,143 333,154 349,160 86,159 103,151 121,150 141,142 237,146 218,152,a 255,138 274,151,a 198,158,a 177,164,a 159,155 136,163 255,162,a 293,158 310,167 328,173 66,187 84,182 101,173 119,173 152,177,a 171,189,a 213,178,a 235,170,a 274,173,a 293,182 313,185 332,190 348,179 368,187 64,208 82,205 98,198 117,195 134,187 155,198,a 193,185,a 228,196,a 252,192,a 281,198,a 303,201,a 323,202 341,203 359,206 55,228 76,225 93,219 112,216 134,211,a 155,215,a 185,212,c 209,203,b 243,214 264,216,c 223,221,a 289,222,a 314,222 332,222 350,222 369,225 67,245 87,243 105,238 125,235,a 146,233,a 168,231,a 203,235,b 275,242,a 302,243,a 322,242 341,245 360,245 376,254 60,265 79,262 99,259 118,259 138,256,a 159,256,a 183,253,b 215,258,a 245,249,e 268,271,a 287,262,a 308,261 330,262 349,265 367,274 71,283 90,281 108,279 128,280,a 150,279,a 172,278,a 198,283,d 227,288,b 249,286,a 289,281,a 308,276 325,281 343,284 62,302 82,300 101,300 119,302 139,302,a 161,302,a 183,311,a 268,299,a 288,300 306,295 321,300 340,302 354,294 370,300 73,320 92,321 111,321 129,322 147,327,a 168,330,a 211,314,b 249,312,a 231,326,a 194,334,a 289,318 305,312 322,319 339,324 354,314 371,323 64,339 84,340 102,341 120,341 138,349 158,349 214,342,a 270,326,a 252,339,a 234,353,a 176,355,a 198,359,a 305,331 287,340 322,337 341,346 355,335 73,359 92,360 110,364 129,367 147,370 165,373 216,371,a 270,350 254,365 183,378 200,384 287,362 304,351 322,356 356,357 338,366 98,380 116,384 134,388 152,391 170,396 237,382 218,392 270,374 253,387 188,399 287,383 305,370 321,376 104,401 123,405 140,409 158,412 176,417 207,405 225,416 239,402 271,395 287,405 256,411 304,391 336,394 321,407 147,429 165,434 194,421 182,438 211,430 227,440 241,427 258,436 274,422 290,430 304,415 199,448 244,449 171,455"],
  [630, "670,159 704,159 650,173 687,173,a 724,171 743,181 630,188 649,197,a 668,184,a 706,184,a 689,199,a 726,199,a 611,217 631,213,a 669,213,b 710,212,a 744,205,a 763,208 599,233 649,228,a 730,221,a 690,228,b 751,227,a 770,233 629,240,a 611,250 668,244,b 713,241,b 735,246,a 647,255,a 758,252,a 627,266,a 691,261,c 776,261 608,274 667,274,b 721,268,a 743,272,a 762,275 644,282,a 615,295 706,289,b 634,304,a 658,300,a 682,298,b 729,293,a 750,296,a 762,316 699,317,a 721,317,a 743,321,a 629,328 649,324,a 670,324,a 688,339,a 709,341,a 740,345 651,349 669,347 697,360 725,356 660,367"],
  [630, "1153,134 1112,147 1138,149 1171,143 1204,144 1092,155 1156,156 1187,154 1125,163 1141,170 1173,167 1204,166 1220,166 1239,170 1090,177 1109,172 1157,174 1189,174 1129,185 1208,187 1226,188 1076,193 1097,192 1145,193 1170,192 1190,197 1244,193 1116,201 1132,205 1161,210 1179,216,a 1213,209 1231,209 1075,215 1094,212 1248,217 1109,222 1198,222 1140,225,a 1161,232,a 1264,229 1079,236 1097,235 1215,231 1232,231 1062,242 1125,241 1184,244,b 1249,242 1090,255 1110,250 1142,251,a 1205,250 1223,253 1239,255 1263,255 1058,264 1076,261 1163,259,a 1127,270 1099,273 1215,269 1193,270,a 1235,275 1254,275 1272,275 1072,280 1112,278 1148,277,a 1174,282,a 1208,288 1225,290 1085,295 1120,295 1137,298 1158,300,a 1244,294 1263,297 1103,299 1194,302 1180,308,a 1212,310 1230,311 1072,310 1090,316 1143,317 1162,320 1244,316 1126,315 1108,321 1195,323 1212,330 1177,331 1096,338 1131,336 1227,328 1113,343 1149,341 1193,345 1243,339 1225,349 1101,358 1134,356 1167,352 1208,358 1120,363 1154,365 1181,362 1138,380 1173,373 1196,375 1155,390"],
  [820, "157,64 210,67 243,71 307,81 139,89 157,87 174,80 192,73 226,78 256,87 283,86 100,118 117,111 136,112 153,109 171,102 188,95 205,88 238,97 277,100 298,100 315,101 333,113 74,146 92,141 109,137 127,130 144,129 167,121 184,115 202,110 219,102 235,118 254,108 270,124 289,116 302,129 316,124 332,136 349,136 67,167 85,163 103,158 121,155 138,148 162,146 180,140 197,132 214,122 250,131 232,140 282,140 265,147 214,146,a 298,152 315,146 331,157 349,159 61,191 79,185 97,181 115,175 132,173 152,166,a 173,163 194,157,a 229,163,a 248,153 209,175,a 280,162 261,171,a 297,174 313,170 332,177 369,174 352,181 53,213 70,211 88,204 106,200 125,196,a 147,191,a 168,190,a 189,184,a 223,195,a 243,185,a 279,186,a 261,199,a 298,197 315,192 333,199 350,203 369,197 62,231 81,228 99,221 118,217,a 139,215,a 160,215,a 181,211,a 202,205,a 220,224,b 240,212,a 280,213,a 260,227,a 300,219 318,210 365,217 328,227 346,224 382,225 53,250 72,250 91,250 108,241 127,239,a 149,239,a 172,238,a 197,233,b 241,241,b 278,240,a 298,243,a 318,240 337,247 354,239 373,241 385,248 43,270 62,270 80,270 99,270 118,262,a 139,262,a 161,261,a 185,261,b 216,259,d 261,256,a 242,272,b 281,267,a 300,272,a 319,259 336,269 352,257 370,262 53,290 71,290 89,290 107,287 126,286,a 149,285,a 172,288,b 199,289,c 225,294,b 264,285,a 284,292,a 303,297 320,282 338,290 355,275 371,283 388,296 61,309 81,309 100,309 119,309 146,309,a 166,312,a 184,316,a 208,320,b 248,300,a 269,308,a 232,321,a 289,318,a 324,306 310,324 343,312 358,297 376,312 56,329 75,329 93,329 111,332 129,331 149,333,a 171,335,a 253,328,a 193,341,a 272,338,a 328,330 344,333 361,321 376,335 65,349 83,350 101,352 120,352 138,352 158,357,a 215,345,a 236,348,a 295,345,a 258,354,a 179,362,a 320,354 279,361,a 338,355 361,348 372,365 72,370 90,370 108,372 127,373 146,376 164,378 201,368,a 222,372,a 243,373,a 304,366 263,377 186,387,a 319,376 285,384 338,380 354,369 81,389 99,390 118,392 136,396 154,400 172,405 207,392,a 227,395 253,395 272,397 302,387 292,405 310,408 327,397 344,400 106,410 124,412 142,416 160,421 178,425 192,411 210,415 240,411 225,423 260,415 278,419 247,431 298,426 315,430 331,418 111,431 129,433 147,437 165,442 183,446 197,435 215,438 233,446 265,437 283,441 300,449 200,456 252,453 270,459 152,459 170,464 187,472 207,477 221,461 239,467 256,475"],
  [820, "699,197 666,205 720,203 652,218 684,213,a 705,220,a 725,225 668,232,a 741,237 631,247 651,248,a 690,241,b 713,244,a 671,258,a 732,259,a 639,268 701,268,b 657,278,a 680,285,b 722,283,a 742,280 632,288 700,298,a 663,304,a 642,307 683,313,a 720,309,a 739,301 666,328 703,324,a 721,334 685,338"],
  [820, "1145,206 1163,206 1188,206 1204,217 1118,225 1136,227 1153,226 1179,222 1192,237,a 1211,238 1126,244 1145,247,a 1167,244,a 1110,254 1184,264,b 1206,259 1224,259 1125,270 1145,272 1164,268 1110,283 1216,279 1157,292,a 1178,291,a 1198,288 1124,298 1211,300 1140,307 1194,307 1157,318,a 1123,320 1178,316 1140,328 1193,328 1158,342 1176,338"]
];

// Nudges touching dots apart so that a small gap stays between neighbours.
function spread(nodes) {
  for (let k = 0; k < 12; k++) {
    for (let i = 0; i < nodes.length; i++) for (let j = i + 1; j < nodes.length; j++) {
      const p = nodes[i], q = nodes[j];
      const dx = q.x - p.x, dy = q.y - p.y;
      const d = Math.hypot(dx, dy), min = p.r + q.r + GAP;
      if (!d || d >= min) continue;
      const push = (min - d) / d / 2;
      p.x -= dx * push; p.y -= dy * push;
      q.x += dx * push; q.y += dy * push;
    }
  }
  return nodes;
}

const dots = clusters.flatMap(([top, text]) => spread(text.split(" ").map(t => {
  const [u, v, s] = t.split(",");
  return { x: toX(+u), y: toY(+v, top), r: s ? SIZES[s] : BASE };
})));
document.getElementById("dots").innerHTML = dots
  .map(n => `<circle cx="${n.x.toFixed(1)}" cy="${n.y.toFixed(1)}" r="${n.r}"/>`).join("");
```
